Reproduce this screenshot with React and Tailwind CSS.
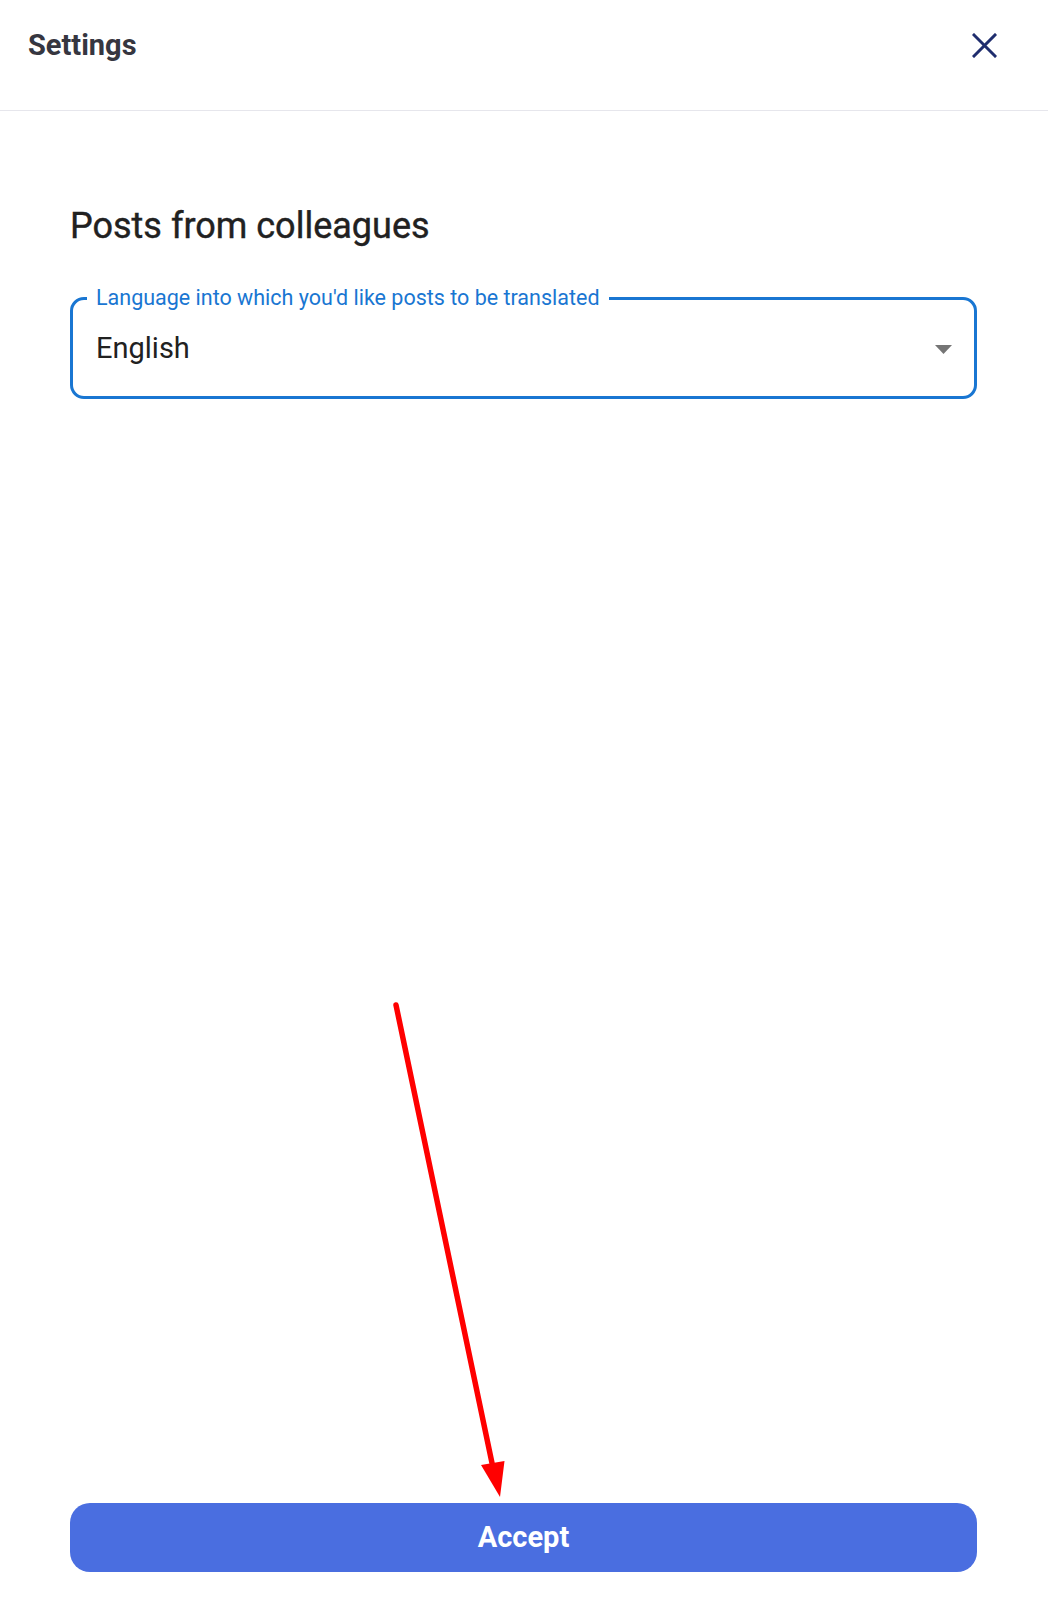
export default function App() {
  return (
    <div className="relative w-full h-[1604px] bg-white flex flex-col" style={{ fontFamily: 'Roboto, "Liberation Sans", sans-serif' }}>
      <div className="h-[111px] border-b border-[#e6e6ec] shrink-0">
        <div className="h-[90px] flex items-center justify-between pl-[28px] pr-[51px]">
          <h1 className="text-[29px] leading-[36px] font-bold text-[#363640]">Settings</h1>
          <svg width="25" height="25" viewBox="0 0 25 25" className="text-[#1f2d6e]">
            <path d="M2 2 L23 23 M23 2 L2 23" stroke="currentColor" strokeWidth="3" strokeLinecap="square" fill="none" />
          </svg>
        </div>
      </div>
      <div className="flex-1 flex flex-col px-[70px] pr-[71px] pb-[32px]">
        <h2 className="mt-[94px] text-[36px] leading-[42px] font-normal text-[#212121]" style={{ WebkitTextStroke: '0.4px #212121' }}>Posts from colleagues</h2>
        <div className="relative mt-[50px] h-[102px] border-[3px] border-[#1976d2] rounded-[14px] flex items-center pl-[23px] pr-[22px]">
          <span className="absolute left-[14px] top-[-14px] bg-white px-[9px] text-[21.5px] leading-[24px] text-[#1976d2]">
            Language into which you'd like posts to be translated
          </span>
          <span className="flex-1 text-[29px] leading-[36px] text-[#212121]">English</span>
          <svg width="17" height="9" viewBox="0 0 17 9" className="mt-[2px]">
            <polygon points="0,0 17,0 8.5,9" fill="#757575" />
          </svg>
        </div>
        <div className="flex-1" />
        <button className="h-[69px] w-full rounded-[20px] bg-[#4a6ee0] text-white text-[29px] font-bold">Accept</button>
      </div>
      <svg className="absolute left-0 top-0 pointer-events-none" width="1048" height="1604">
        <line x1="396" y1="1005" x2="492" y2="1463" stroke="#ff0000" strokeWidth="5.5" strokeLinecap="round" />
        <polygon points="481,1465 504.5,1461 500,1497" fill="#ff0000" />
      </svg>
    </div>
  );
}
